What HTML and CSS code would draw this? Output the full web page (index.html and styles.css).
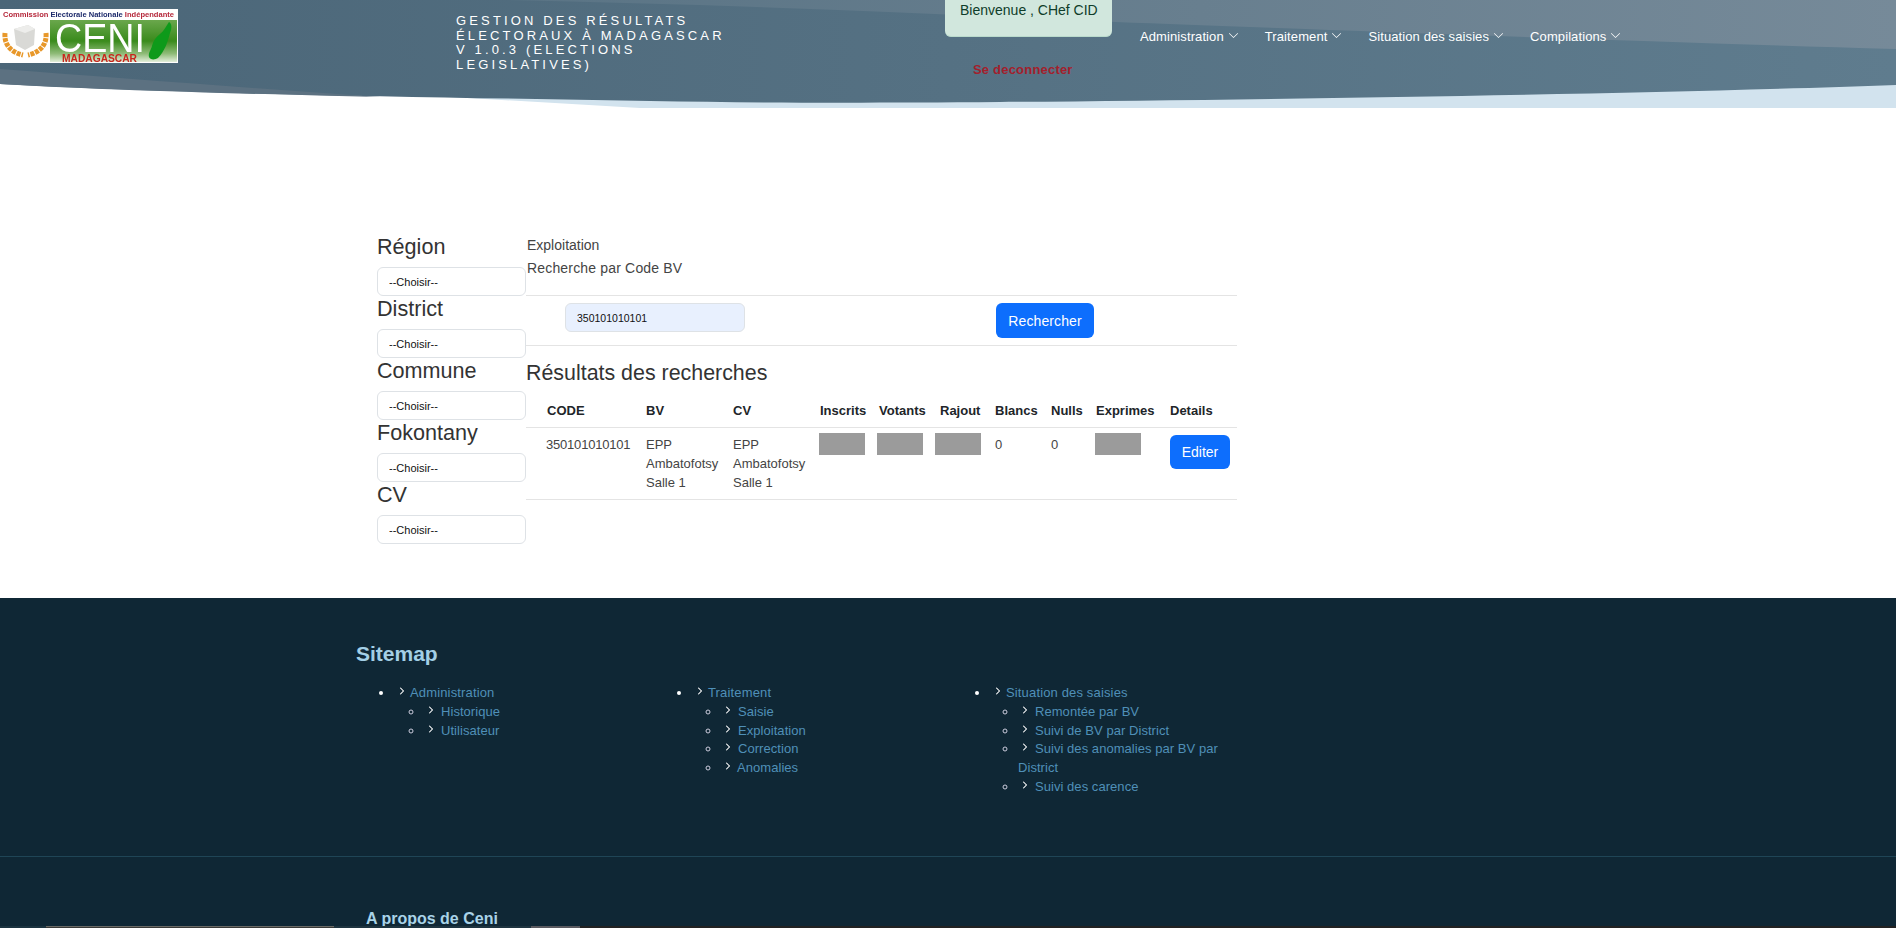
FILE: index.html
```html
<!DOCTYPE html>
<html>

<head>
	<title>Gestion des résultats électoraux</title>
	<meta charset="utf-8">
	<meta name="viewport" content="width=device-width, initial-scale=1.0">
	<link rel="stylesheet" href="styles.css">
</head>

<body>
	<!-- chevrons used all over the page -->
	<svg class="sprite" aria-hidden="true">
		<symbol id="i-down" viewBox="0 0 16 16"><path d="M1.646 4.646a.5.5 0 0 1 .708 0L8 10.293l5.646-5.647a.5.5 0 0 1 .708.708l-6 6a.5.5 0 0 1-.708 0l-6-6a.5.5 0 0 1 0-.708z"/></symbol>
		<symbol id="i-right" viewBox="0 0 16 16"><path d="M4.646 1.646a.5.5 0 0 1 .708 0l6 6a.5.5 0 0 1 0 .708l-6 6a.5.5 0 0 1-.708-.708L10.293 8 4.646 2.354a.5.5 0 0 1 0-.708z"/></symbol>
	</svg>

	<header class="top-header">
		<!-- curved background of the header -->
		<svg class="header-bg" viewBox="0 0 1896 108" preserveAspectRatio="none" aria-hidden="true">
			<defs>
				<linearGradient id="bg-dark" x1="0" x2="1" y1="0" y2="0">
					<stop offset="0" stop-color="#4b6678"/>
					<stop offset="1" stop-color="#5f7c8e"/>
				</linearGradient>
				<linearGradient id="bg-light" x1="0" x2="1" y1="0" y2="0">
					<stop offset="0" stop-color="#5a7485"/>
					<stop offset="1" stop-color="#768a99"/>
				</linearGradient>
			</defs>
			<path d="M400 94 L640 108 L1896 108 L1896 80 Z" fill="#d2e3ee"/>
			<path d="M0 0 H1896 V85 C1650 94 1250 100 1000 102 C860 103 760 103 650 101 C420 97 190 94 0 84 Z" fill="url(#bg-dark)"/>
			<path d="M505 0 C700 4 900 12 1116 22 C1300 29 1620 41 1896 49 V0 Z" fill="url(#bg-light)"/>
			<path d="M0 69 C120 78 250 88 380 97 C250 94 100 90 0 84 Z" fill="#5c7181"/>
		</svg>

		<svg class="logo" viewBox="0 0 178 54" aria-label="CENI Madagascar">
			<defs>
				<linearGradient id="logo-green" x1="0" x2="0" y1="0" y2="1">
					<stop offset="0" stop-color="#6aa74c"/>
					<stop offset="0.5" stop-color="#3a8b1c"/>
					<stop offset="0.8" stop-color="#8fbb78"/>
					<stop offset="1" stop-color="#e3eedb"/>
				</linearGradient>
			</defs>
			<rect width="178" height="54" fill="#fff"/>
			<text x="3" y="8" class="logo-caption" textLength="171" lengthAdjust="spacingAndGlyphs">Commission <tspan fill="#1d2a6b">Electorale Nationale</tspan> Indépendante</text>
			<rect x="50" y="11" width="127" height="42" fill="url(#logo-green)"/>
			<!-- urn and laurels -->
			<path d="M5 24 C4 35 10 43 23 46 M46 24 C47 35 41 43 28 46" fill="none" stroke="#e8982a" stroke-width="5" stroke-dasharray="4 1"/>
			<path d="M14 20 L28 16 L35 20 L34 36 L25 41 L16 36 Z" fill="#d9d9d6"/>
			<path d="M14 20 L25 24 L35 20 L28 16 Z" fill="#ededeb"/>
			<text x="55" y="43" class="logo-ceni" textLength="90" lengthAdjust="spacingAndGlyphs">CENI</text>
			<text x="62" y="52.5" class="logo-mada" textLength="75" lengthAdjust="spacingAndGlyphs">MADAGASCAR</text>
			<path d="M169 13 C172 15 172 19 170 24 C168 32 165 42 158 49 C155 51 150 51 149 48 C148 44 151 41 152 37 C153 32 156 28 160 25 C164 22 166 17 169 13 Z" fill="#0e9a1a"/>
		</svg>

		<h1 class="site-title">GESTION DES RÉSULTATS ÉLECTORAUX À MADAGASCAR<br>V 1.0.3 (ELECTIONS LEGISLATIVES)</h1>

		<div class="user-box">
			<div class="welcome">Bienvenue , CHef CID</div>
			<a class="logout" href="#">Se deconnecter</a>
		</div>

		<nav class="main-nav">
			<a href="#">Administration<svg class="chev-down"><use href="#i-down"/></svg></a>
			<a href="#">Traitement<svg class="chev-down"><use href="#i-down"/></svg></a>
			<a href="#">Situation des saisies<svg class="chev-down"><use href="#i-down"/></svg></a>
			<a href="#">Compilations<svg class="chev-down"><use href="#i-down"/></svg></a>
		</nav>
	</header>

	<main class="page">
		<aside class="filters">
			<label class="filter-label" for="region">Région</label>
			<select class="filter-select" id="region"><option>--Choisir--</option></select>
			<label class="filter-label" for="district">District</label>
			<select class="filter-select" id="district"><option>--Choisir--</option></select>
			<label class="filter-label" for="commune">Commune</label>
			<select class="filter-select" id="commune"><option>--Choisir--</option></select>
			<label class="filter-label" for="fokontany">Fokontany</label>
			<select class="filter-select" id="fokontany"><option>--Choisir--</option></select>
			<label class="filter-label" for="cv">CV</label>
			<select class="filter-select" id="cv"><option>--Choisir--</option></select>
		</aside>

		<section class="results">
			<p class="crumb">Exploitation</p>
			<p class="crumb crumb-search">Recherche par Code BV</p>

			<form class="search-row">
				<input class="search-input" type="text" value="350101010101">
				<button class="btn btn-search" type="button">Rechercher</button>
			</form>

			<h2 class="results-title">Résultats des recherches</h2>

			<table class="results-table">
				<colgroup>
					<col class="col-code">
					<col class="col-bv">
					<col class="col-cv">
					<col class="col-num">
					<col class="col-num">
					<col class="col-rajout">
					<col class="col-blancs">
					<col class="col-nulls">
					<col class="col-exp">
					<col class="col-details">
				</colgroup>
				<thead>
					<tr>
						<th>CODE</th>
						<th>BV</th>
						<th>CV</th>
						<th class="shift-inscrits">Inscrits</th>
						<th class="shift-votants">Votants</th>
						<th class="shift-rajout">Rajout</th>
						<th>Blancs</th>
						<th>Nulls</th>
						<th class="shift-inscrits">Exprimes</th>
						<th>Details</th>
					</tr>
				</thead>
				<tbody>
					<tr>
						<td class="code-cell">350101010101</td>
						<td>EPP Ambatofotsy Salle 1</td>
						<td>EPP Ambatofotsy Salle 1</td>
						<td class="masked-cell"><div class="masked"></div></td>
						<td class="masked-cell"><div class="masked"></div></td>
						<td class="masked-cell"><div class="masked"></div></td>
						<td>0</td>
						<td>0</td>
						<td class="masked-cell"><div class="masked"></div></td>
						<td class="action-cell"><button class="btn btn-edit" type="button">Editer</button></td>
					</tr>
				</tbody>
			</table>
		</section>
	</main>

	<footer class="site-footer">
		<div class="sitemap">
			<h3 class="sitemap-title">Sitemap</h3>
			<div class="sitemap-cols">
				<ul>
					<li><svg class="chev"><use href="#i-right"/></svg><a href="#">Administration</a>
						<ul>
							<li><svg class="chev"><use href="#i-right"/></svg><a href="#">Historique</a></li>
							<li><svg class="chev"><use href="#i-right"/></svg><a href="#">Utilisateur</a></li>
						</ul>
					</li>
				</ul>
				<ul class="col-middle">
					<li><svg class="chev"><use href="#i-right"/></svg><a href="#">Traitement</a>
						<ul>
							<li><svg class="chev"><use href="#i-right"/></svg><a href="#">Saisie</a></li>
							<li><svg class="chev"><use href="#i-right"/></svg><a href="#">Exploitation</a></li>
							<li><svg class="chev"><use href="#i-right"/></svg><a href="#">Correction</a></li>
							<li class="tight"><svg class="chev"><use href="#i-right"/></svg><a href="#">Anomalies</a></li>
						</ul>
					</li>
				</ul>
				<ul class="col-last">
					<li><svg class="chev"><use href="#i-right"/></svg><a href="#">Situation des saisies</a>
						<ul>
							<li><svg class="chev"><use href="#i-right"/></svg><a href="#">Remontée par BV</a></li>
							<li><svg class="chev"><use href="#i-right"/></svg><a href="#">Suivi de BV par District</a></li>
							<li><svg class="chev"><use href="#i-right"/></svg><a href="#">Suivi des anomalies par BV par District</a></li>
							<li><svg class="chev"><use href="#i-right"/></svg><a href="#">Suivi des carence</a></li>
						</ul>
					</li>
				</ul>
			</div>
		</div>

		<div class="about">
			<h4 class="about-title">A propos de Ceni</h4>
		</div>

		<!-- the next band starts right at the fold -->
		<div class="fold-strip">
			<span class="strip-a"></span>
			<span class="strip-b"></span>
			<span class="strip-c"></span>
			<span class="strip-d"></span>
			<span class="strip-e"></span>
		</div>
	</footer>
</body>

</html>
```

FILE: styles.css
```css
html, body {
    margin: 0;
    height: 928px;
    overflow: hidden;
}

body {
    background: #fff;
    color: #333;
    font-family: "Liberation Sans", Arial, sans-serif;
    font-size: 14px;
}

.sprite {
    display: none;
}

/* header */

.top-header {
    position: relative;
    display: flex;
    align-items: flex-start;
    height: 108px;
    overflow: hidden;
}

.header-bg {
    position: absolute;
    left: 0;
    top: 0;
    width: 100%;
    height: 108px;
}

.logo {
    position: relative;
    flex: none;
    width: 178px;
    height: 54px;
    margin-top: 9px;
    filter: blur(0.3px);
}

.logo-caption {
    font-family: "Liberation Sans", sans-serif;
    font-size: 7px;
    font-weight: bold;
    fill: #b5273a;
}

.logo-ceni {
    font-family: "Liberation Sans", sans-serif;
    font-size: 40px;
    fill: #fff;
}

.logo-mada {
    font-family: "Liberation Sans", sans-serif;
    font-size: 11px;
    font-weight: bold;
    fill: #c9261d;
}

.site-title {
    position: relative;
    flex: none;
    width: 278px;
    margin: 14px 0 0 278px;
    color: #fff;
    font-size: 13px;
    font-weight: normal;
    line-height: 14.5px;
    letter-spacing: 3.15px;
}

.user-box {
    position: relative;
    flex: none;
    width: 167px;
    margin-left: 211px;
}

.welcome {
    box-sizing: border-box;
    height: 37px;
    padding: 2px 0 0 15px;
    background: #d1e7dd;
    border-bottom: 1px solid #badbcc;
    border-radius: 0 0 6px 6px;
    color: #0f3d2a;
    line-height: 17px;
}

.logout {
    display: block;
    margin: 25px 0 0 28px;
    color: #a3202c;
    font-size: 13px;
    font-weight: bold;
    letter-spacing: 0.2px;
    line-height: 16px;
    text-decoration: none;
    white-space: nowrap;
}

.main-nav {
    position: relative;
    display: flex;
    gap: 26px;
    margin: 28px 0 0 28px;
}

.main-nav a {
    display: flex;
    align-items: center;
    color: #fff;
    font-size: 13px;
    letter-spacing: 0.1px;
    line-height: 17px;
    text-decoration: none;
    white-space: nowrap;
}

.chev-down {
    width: 11px;
    height: 11px;
    margin: -3px 0 0 4px;
    fill: #fff;
}

/* main part */

.page {
    display: flex;
    align-items: flex-start;
    padding: 126px 0 54px 377px;
}

.filters {
    flex: none;
    width: 149px;
}

.filter-label {
    display: block;
    margin-bottom: 7px;
    color: #333;
    font-size: 21.6px;
    line-height: 26px;
}

.filter-select {
    display: block;
    box-sizing: border-box;
    width: 149px;
    height: 29px;
    padding: 0 0 0 11px;
    background: #fff;
    border: 1px solid #dee2e6;
    border-radius: 6px;
    color: #111;
    font-family: "Liberation Sans", sans-serif;
    font-size: 11px;
    appearance: none;
}

.results {
    flex: none;
    width: 711px;
}

.crumb {
    margin: 0;
    padding-left: 1px;
    color: #444;
    font-size: 14px;
    line-height: 23px;
}

.crumb-search {
    letter-spacing: 0.17px;
}

.search-row {
    display: flex;
    align-items: flex-start;
    margin: 15px 0 0;
    padding: 7px 0;
    border-top: 1px solid #e4e4e4;
    border-bottom: 1px solid #e4e4e4;
}

.search-input {
    box-sizing: border-box;
    width: 180px;
    height: 29px;
    margin-left: 39px;
    padding: 0 0 0 11px;
    background: #e8f0fe;
    border: 1px solid #dee2e6;
    border-radius: 6px;
    color: #111;
    font-family: "Liberation Sans", sans-serif;
    font-size: 10.5px;
}

.btn {
    box-sizing: border-box;
    background: #0d6efd;
    border: 0;
    border-radius: 6px;
    color: #fff;
    font-family: "Liberation Sans", sans-serif;
    font-size: 14px;
}

.btn-search {
    width: 98px;
    height: 35px;
    margin-left: 251px;
    letter-spacing: 0.1px;
}

.results-title {
    margin: 14px 0 7px;
    color: #333;
    font-size: 21.4px;
    font-weight: normal;
    line-height: 26px;
}

.results-table {
    width: 711px;
    border-collapse: collapse;
    table-layout: fixed;
    color: #444;
    font-size: 13px;
    line-height: 19px;
}

.col-code { width: 113px; }
.col-bv { width: 87px; }
.col-cv { width: 86px; }
.col-num { width: 58px; }
.col-rajout { width: 60px; }
.col-blancs { width: 56px; }
.col-nulls { width: 44px; }
.col-exp { width: 75px; }
.col-details { width: 74px; }

.results-table th {
    height: 34px;
    padding: 0 0 0 7px;
    border-bottom: 1px solid #e4e4e4;
    color: #212529;
    font-weight: bold;
    text-align: left;
    white-space: nowrap;
}

.results-table th:first-child {
    padding-left: 21px;
}

.results-table th.shift-inscrits {
    padding-left: 8px;
}

.results-table th.shift-votants {
    padding-left: 9px;
}

.results-table th.shift-rajout {
    padding-left: 12px;
}

.results-table td {
    padding: 7px 0 7px 7px;
    border-bottom: 1px solid #e4e4e4;
    vertical-align: top;
}

.results-table td.code-cell {
    padding-left: 20px;
    letter-spacing: -0.2px;
}

.results-table td.masked-cell {
    padding-top: 5px;
}

.masked {
    width: 46px;
    height: 22px;
    background: #9b9b9b;
}

.btn-edit {
    display: block;
    width: 60px;
    height: 34px;
}

/* footer */

.site-footer {
    position: relative;
    height: 330px;
    overflow: hidden;
    background: #0f2735;
}

.sitemap {
    padding: 43px 0 59px;
    border-bottom: 1px solid #1f4556;
}

.sitemap-title {
    margin: 0 0 18px 356px;
    color: #a3cfe6;
    font-size: 21px;
    font-weight: bold;
    line-height: 25px;
}

.sitemap-cols {
    display: flex;
    margin-left: 360px;
    font-size: 13px;
    line-height: 18.8px;
}

.sitemap-cols > ul {
    box-sizing: border-box;
    flex: none;
    width: 298px;
    margin: 0;
    padding: 0 14px 0 34px;
    color: #fff;
}

.sitemap-cols ul ul {
    margin: 0;
    padding-left: 30px;
    color: #ccd;
}

.sitemap-cols .col-middle ul {
    padding-left: 29px;
}

.sitemap-cols .col-last ul {
    padding-left: 28px;
}

.sitemap-cols a {
    color: #4f90b8;
    letter-spacing: 0.15px;
    text-decoration: none;
}

.chev {
    width: 8px;
    height: 8px;
    margin: 0 4px 2px 4px;
    fill: #fff;
    stroke: #fff;
    stroke-width: 1;
}

.sitemap-cols ul ul .chev {
    margin: 0 6px 2px 3px;
}

.sitemap-cols ul ul a {
    letter-spacing: 0.05px;
}

.sitemap-cols ul ul .tight .chev {
    margin-right: 5px;
}

.about {
    height: 69px;
    box-sizing: border-box;
    padding: 52px 0 0 366px;
    overflow: hidden;
}

.about-title {
    margin: 0;
    color: #a9d3e8;
    font-size: 16px;
    font-weight: bold;
    line-height: 20px;
}

.fold-strip {
    display: flex;
    height: 3px;
    background: #222;
}

.strip-a { flex: none; width: 46px; background: #1b3340; }
.strip-b { flex: none; width: 288px; background: #3a3a38; border-top: 1px solid #6a6a66; }
.strip-c { flex: none; width: 197px; background: #1e3440; }
.strip-d { flex: none; width: 49px; background: #5a5a60; }
.strip-e { flex: 1; background: #222; }
```
